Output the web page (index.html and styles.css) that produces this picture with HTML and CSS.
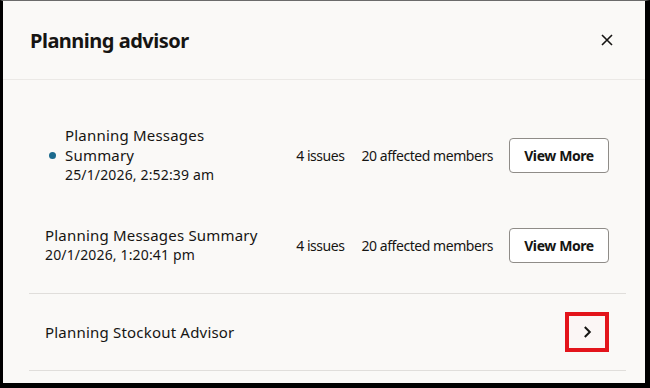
FILE: index.html
```html
<!DOCTYPE html>
<html lang="en">
<head>
    <meta charset="UTF-8">
    <title>Planning advisor</title>
    <link rel="stylesheet" href="styles.css">
</head>
<body>
    <div class="frame">
        <div class="header">
            <div class="title">Planning advisor</div>
            <button class="close" aria-label="Close">
                <svg width="12" height="12" viewBox="0 0 12 12"><path d="M1 1L11 11M11 1L1 11" stroke="#161513" stroke-width="1.6" fill="none"/></svg>
            </button>
        </div>
        <div class="list">
            <div class="msg">
                <div class="info">
                    <span class="dot"></span>
                    <div class="text narrow">
                        <div class="name">Planning Messages Summary</div>
                        <div class="date">25/1/2026, 2:52:39 am</div>
                    </div>
                </div>
                <div class="count">4 issues</div>
                <div class="count">20 affected members</div>
                <button class="more">View More</button>
            </div>
            <div class="msg">
                <div class="info">
                    <div class="text">
                        <div class="name">Planning Messages Summary</div>
                        <div class="date">20/1/2026, 1:20:41 pm</div>
                    </div>
                </div>
                <div class="count">4 issues</div>
                <div class="count">20 affected members</div>
                <button class="more">View More</button>
            </div>
            <div class="stockout">
                <div class="name">Planning Stockout Advisor</div>
                <button class="go" aria-label="Open">
                    <svg width="10" height="14" viewBox="0 0 10 14"><path d="M2.8 2L7.8 7L2.8 12" stroke="#161513" stroke-width="2" fill="none"/></svg>
                </button>
            </div>
        </div>
    </div>
</body>
</html>
```

FILE: styles.css
```css
* {
    box-sizing: border-box;
}

body, html {
    margin: 0;
    padding: 0;
    font-family: "Noto Sans", "Liberation Sans", sans-serif;
    color: #161513;
}

.frame {
    width: 650px;
    height: 388px;
    background: #faf9f7;
    border-top: 1px solid #6b6b6b;
    border-left: 3px solid #000;
    border-right: 5px solid #000;
    border-bottom: 5px solid #000;
}

.header {
    height: 79px;
    border-bottom: 1px solid #ebe9e6;
    display: flex;
    align-items: center;
    justify-content: space-between;
    padding: 0 28px 0 27px;
}
.title {
    font-size: 20px;
    font-weight: bold;
    letter-spacing: -0.5px;
}
.close {
    width: 20px;
    height: 20px;
    border: none;
    background: none;
    padding: 0;
    display: flex;
    align-items: center;
    justify-content: center;
}

.list {
    padding: 30px 19px 0 26px;
}
.msg {
    height: 90px;
    display: flex;
    align-items: center;
    padding: 0 17px 0 16px;
    font-size: 15px;
}
.info {
    flex: 1;
    display: flex;
    align-items: center;
}
.dot {
    width: 7px;
    height: 7px;
    border-radius: 50%;
    background: #1b6a8d;
    margin: 0 9px 0 4px;
}
.text {
    line-height: 20px;
}
.name {
    letter-spacing: 0.2px;
}
.narrow {
    width: 150px;
}
.date {
    font-size: 14px;
    letter-spacing: 0.15px;
}
.count {
    margin-left: 17px;
    font-size: 14px;
    letter-spacing: -0.45px;
}
.more {
    margin-left: 16px;
    width: 100px;
    height: 35px;
    border: 1px solid #8f8c88;
    border-radius: 4px;
    background: #fff;
    font-family: inherit;
    font-size: 14px;
    font-weight: bold;
    letter-spacing: -0.4px;
    color: #161513;
}

.stockout {
    margin-top: 3px;
    height: 78px;
    border-top: 1px solid #e0dedb;
    border-bottom: 1px solid #e0dedb;
    display: flex;
    align-items: center;
    justify-content: space-between;
    padding: 0 17px 0 16px;
    font-size: 15px;
}
.go {
    width: 44px;
    height: 40px;
    border: 4px solid #e3141b;
    background: #fbf6f5;
    padding: 0;
    display: flex;
    align-items: center;
    justify-content: center;
}
```
